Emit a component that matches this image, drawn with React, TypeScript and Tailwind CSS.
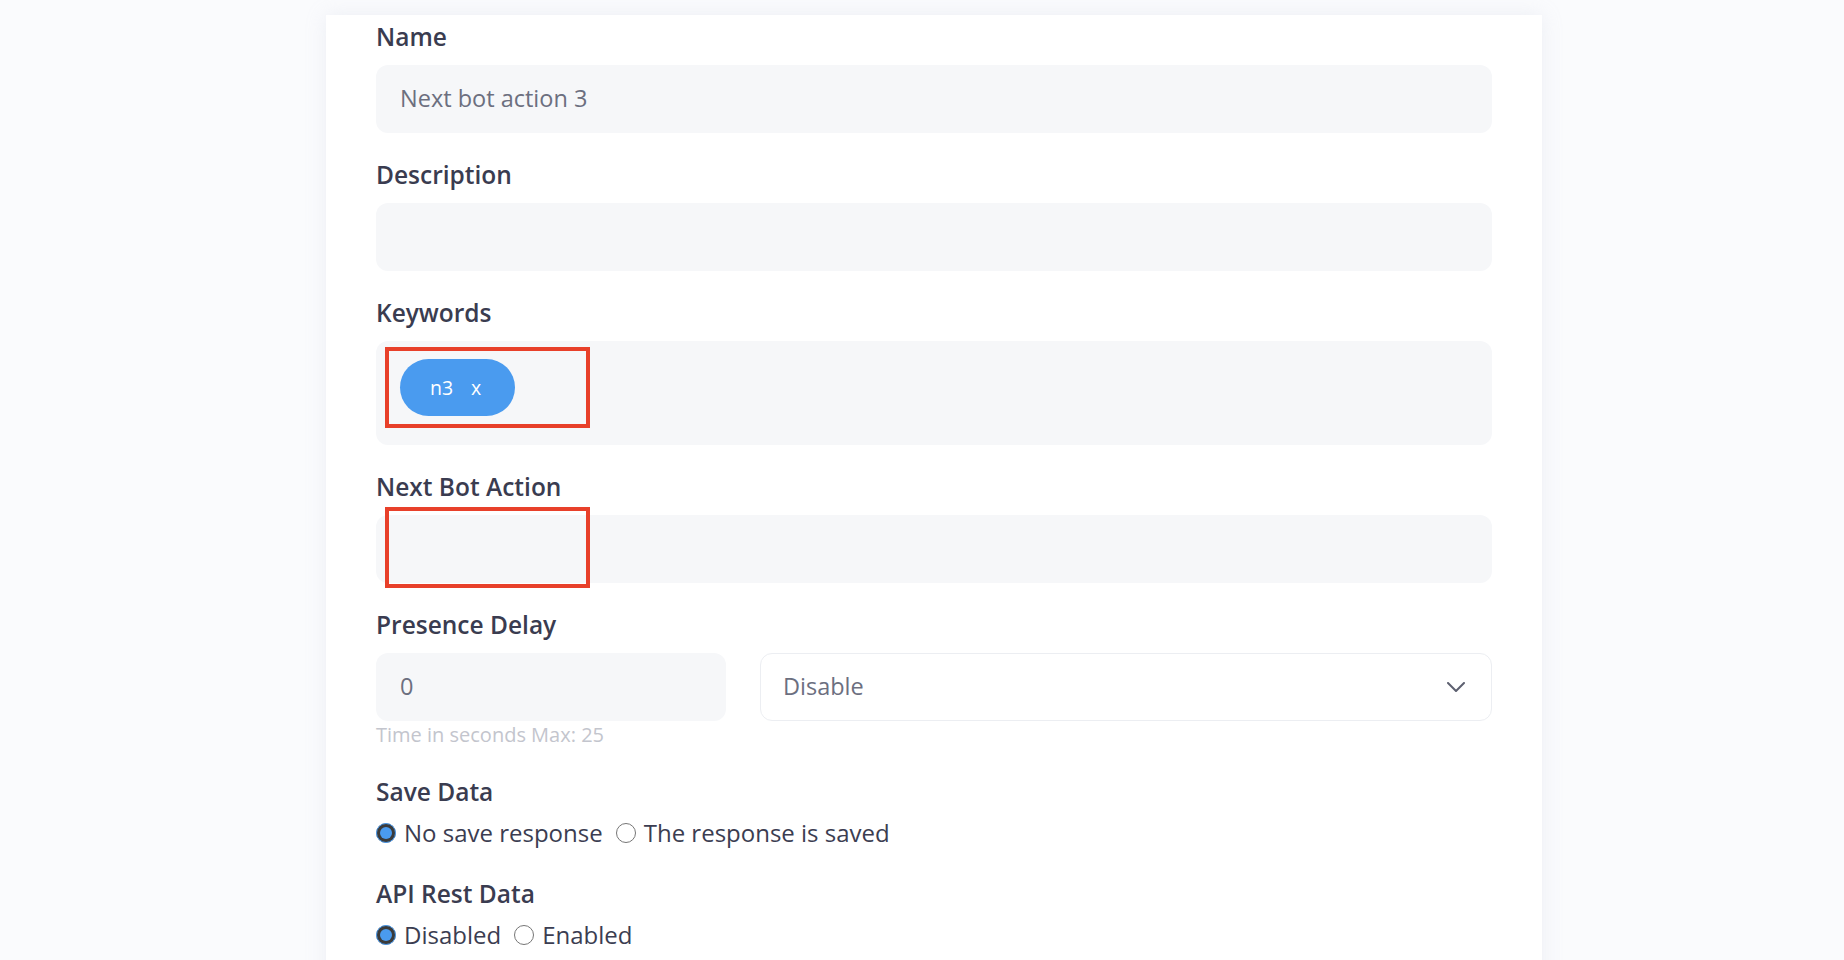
import { ReactNode } from 'react';

const font = { fontFamily: '"Open Sans", "Liberation Sans", sans-serif' };

function Label({ children, className = '' }: { children: ReactNode; className?: string }) {
  return (
    <div className={`h-[32px] text-[24.5px] leading-[33px] font-semibold text-[#3a3c50] ${className}`}>
      {children}
    </div>
  );
}

// red annotation box drawn over the field
function Marker({ top }: { top: string }) {
  return (
    <div className={`absolute left-[9px] ${top} w-[205px] h-[81px] border-4 border-[#e8402a] pointer-events-none`} />
  );
}

function Radio({ label, checked, name }: { label: string; checked?: boolean; name: string }) {
  return (
    <label className="flex items-center mr-[13px]">
      <input
        type="radio"
        name={name}
        defaultChecked={checked}
        className="w-[20px] h-[20px] m-0 accent-[#4a9bef]"
      />
      <span className="ml-[8px] text-[24px] leading-[24px] text-[#3b3d51]">{label}</span>
    </label>
  );
}

export default function App() {
  return (
    <div className="min-h-screen bg-[#fafbfd] pt-[15px]" style={font}>
      <div className="ml-[326px] w-[1216px] min-h-[945px] bg-white px-[50px] pt-[5px] pb-10 shadow-[0_0_18px_rgba(200,205,220,0.25)]">
        <Label>Name</Label>
        <div className="mt-[13px] h-[68px] rounded-[12px] bg-[#f6f7f9] px-[24px] flex items-center text-[23.5px] text-[#6c6f7f]">
          Next bot action 3
        </div>

        <Label className="mt-[25px]">Description</Label>
        <div className="mt-[13px] h-[68px] rounded-[12px] bg-[#f6f7f9]" />

        <Label className="mt-[25px]">Keywords</Label>
        <div className="relative mt-[13px] h-[104px] rounded-[12px] bg-[#f6f7f9] pl-[24px] pt-[18px]">
          <span className="inline-flex items-center h-[57px] rounded-full bg-[#4a9bef] pl-[30px] pr-[34px] text-[19.5px] text-white">
            <span>n3</span>
            <span className="ml-[18px]">x</span>
          </span>
          <Marker top="top-[6px]" />
        </div>

        <Label className="mt-[25px]">Next Bot Action</Label>
        <div className="relative mt-[13px] h-[68px] rounded-[12px] bg-[#f6f7f9]">
          <Marker top="top-[-8px]" />
        </div>

        <Label className="mt-[25px]">Presence Delay</Label>
        <div className="mt-[13px] flex gap-[34px]">
          <div className="w-[350px] h-[68px] rounded-[12px] bg-[#f6f7f9] px-[24px] flex items-center text-[23.5px] text-[#6c6f7f]">
            0
          </div>
          <div className="flex-1 h-[68px] rounded-[12px] bg-white border border-[#eceef2] pl-[22px] pr-[26px] flex items-center justify-between text-[23.5px] text-[#6c6f7f]">
            <span>Disable</span>
            <svg width="18" height="10" viewBox="0 0 18 10" fill="none">
              <path d="M1 1 L9 9 L17 1" stroke="#5d6070" strokeWidth="2" strokeLinecap="round" strokeLinejoin="round" />
            </svg>
          </div>
        </div>
        <div className="mt-[2px] h-[24px] text-[20px] leading-[24px] text-[#c3c5cd]">Time in seconds Max: 25</div>

        <Label className="mt-[28px]">Save Data</Label>
        <div className="mt-[14px] h-[24px] flex items-center">
          <Radio name="save" label="No save response" checked />
          <Radio name="save" label="The response is saved" />
        </div>

        <Label className="mt-[32px]">API Rest Data</Label>
        <div className="mt-[14px] h-[24px] flex items-center">
          <Radio name="api" label="Disabled" checked />
          <Radio name="api" label="Enabled" />
        </div>
      </div>
    </div>
  );
}
